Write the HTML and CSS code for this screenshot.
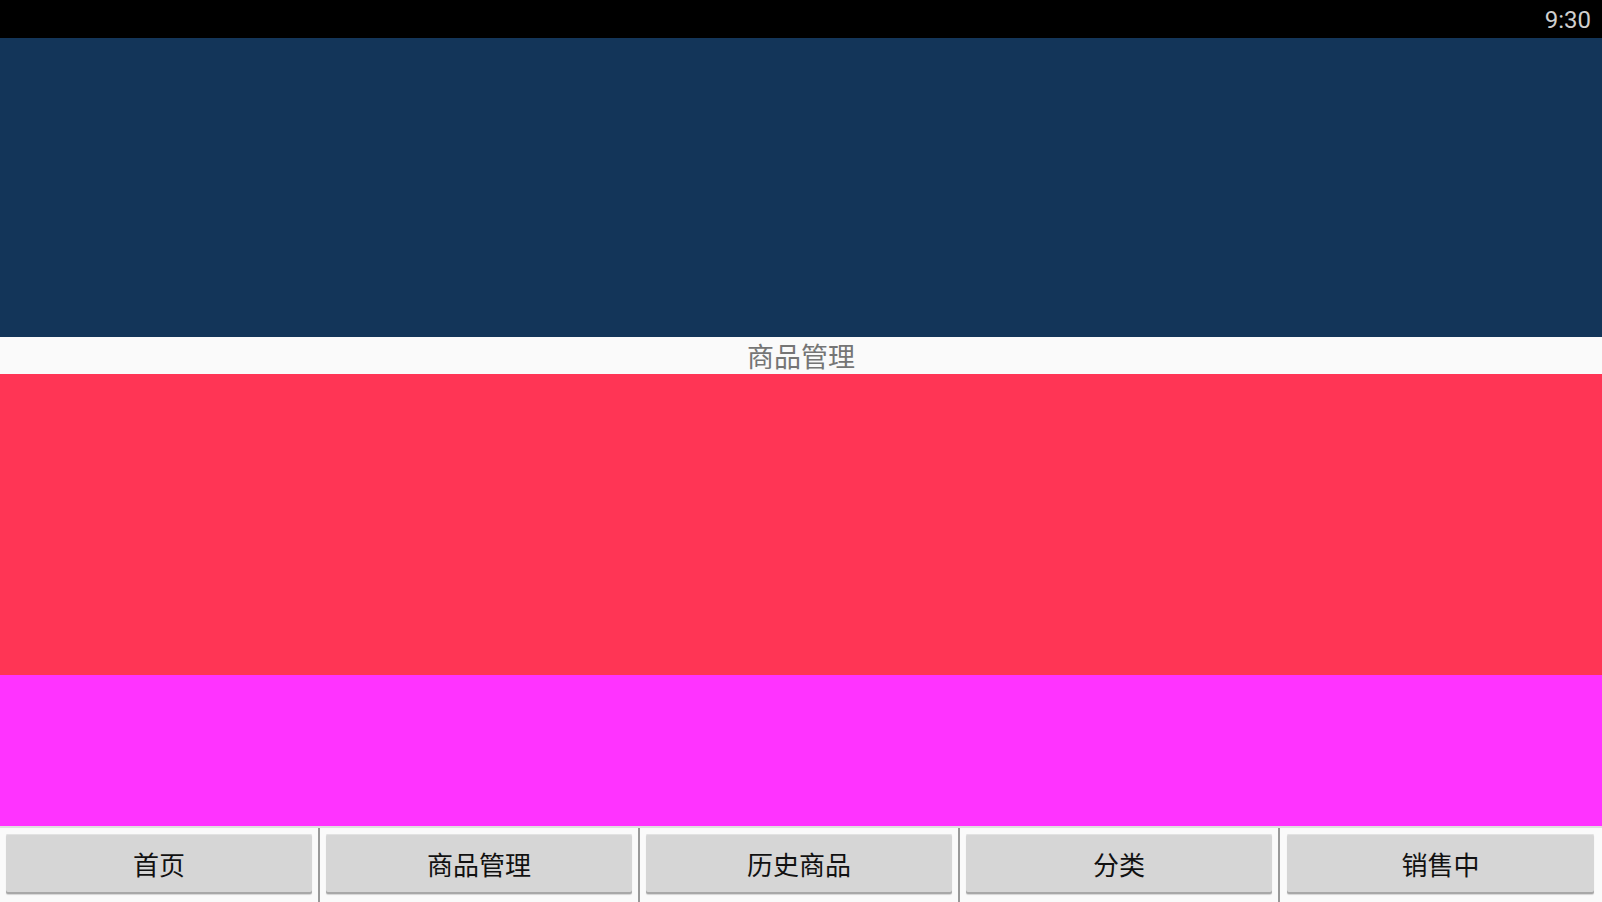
FILE: index.html
```html
<!DOCTYPE html>
<html lang="zh">
<head>
<meta charset="utf-8">
<title>商品管理</title>
<link rel="stylesheet" href="styles.css">
</head>
<body>
<div class="screen">
  <div class="status"><span class="time">9:30</span></div>
  <div class="panel panel-blue"></div>
  <div class="title">商品管理</div>
  <div class="panel panel-red"></div>
  <div class="panel panel-magenta"></div>
  <div class="tabs">
    <div class="cell"><button class="btn">首页</button></div>
    <div class="divider"></div>
    <div class="cell"><button class="btn">商品管理</button></div>
    <div class="divider"></div>
    <div class="cell"><button class="btn">历史商品</button></div>
    <div class="divider"></div>
    <div class="cell"><button class="btn">分类</button></div>
    <div class="divider"></div>
    <div class="cell cell-last"><button class="btn">销售中</button></div>
  </div>
</div>
</body>
</html>
```
FILE: styles.css
```css
html, body {
  margin: 0;
  padding: 0;
  width: 1602px;
  height: 902px;
  overflow: hidden;
  background: #fafafa;
}
.screen {
  display: flex;
  flex-direction: column;
  width: 1602px;
  height: 902px;
  font-family: "Noto Sans CJK SC", Roboto, "Noto Sans", sans-serif;
}
.status {
  height: 38px;
  background: #000;
  display: flex;
  align-items: center;
  justify-content: flex-end;
  padding-right: 11px;
  flex: none;
}
.time {
  font-family: Roboto, "Noto Sans", sans-serif;
  font-size: 24px;
  color: #cfcfcf;
  line-height: 1;
  padding-top: 2px;
}
.panel { flex: none; }
.panel-blue { height: 299px; background: #133559; }
.title {
  height: 37px;
  flex: none;
  background: #fafafa;
  color: #757575;
  font-size: 27px;
  line-height: 37px;
  text-align: center;
}
.panel-red { height: 301px; background: #ff3555; }
.panel-magenta { height: 151px; background: #ff33ff; }
.tabs {
  flex: 1;
  display: flex;
  border-top: 2px solid #e0e0e0;
  background: #fafafa;
}
.cell {
  flex: none;
  width: 318px;
  box-sizing: border-box;
  padding: 6px 6px 0 6px;
  display: flex;
  align-items: flex-start;
}
.cell-last {
  flex: 1;
  width: auto;
  padding: 6px 8px 0 7px;
}
.divider {
  width: 2px;
  background: #9a9a9a;
  flex: none;
}
.btn {
  width: 100%;
  height: 60px;
  margin: 0;
  padding: 0;
  border: none;
  border-radius: 2px;
  background: #d6d6d6;
  box-shadow: inset 0 1px 0 #e2e2e2, inset 0 -2px 0 #a8a8a8, 0 1px 1px rgba(0,0,0,0.15);
  font-family: "Noto Sans CJK SC", sans-serif;
  font-size: 26px;
  color: #111;
  line-height: 60px;
  padding-bottom: 2px;
}
```
